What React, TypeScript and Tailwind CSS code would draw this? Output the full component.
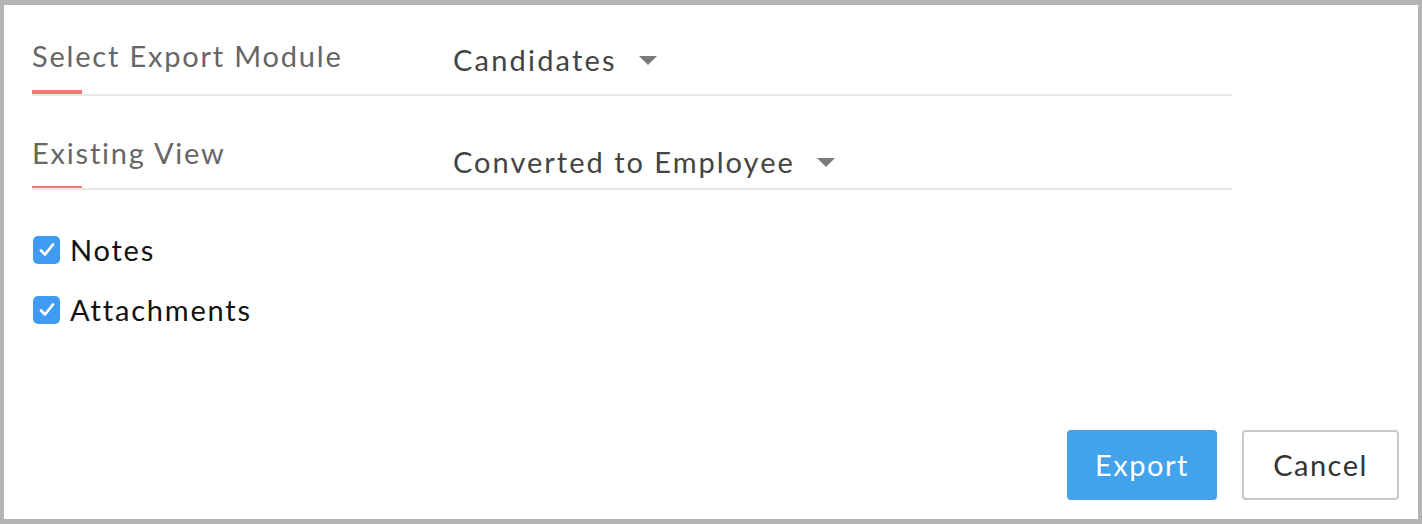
import React from "react";

function Caret() {
  return (
    <svg width="18" height="9" viewBox="0 0 18 9" className="ml-[22px] shrink-0">
      <path d="M0 0 L18 0 L9 9 Z" fill="#7a7a7a" />
    </svg>
  );
}

function Check() {
  return (
    <span className="flex h-[28px] w-[27px] shrink-0 items-center justify-center rounded-[5px] bg-[#3f9cf2]">
      <svg width="20" height="18" viewBox="0 0 20 18">
        <path d="M4 9.5 L8 13.5 L16 3.5" fill="none" stroke="#fff" strokeWidth="2.8" strokeLinecap="round" strokeLinejoin="round" />
      </svg>
    </span>
  );
}

export default function App() {
  return (
    <div
      className="box-border flex h-[524px] w-[1422px] flex-col border-solid border-[#b3b3b3] border-t-[5px] border-l-[4px] border-r-[4px] border-b-[5px] bg-white"
      style={{ fontFamily: "Lato, 'Open Sans', sans-serif" }}
    >
      <div className="flex flex-1 flex-col pl-[28px] pt-[33px]">
        {/* Row 1 */}
        <div className="flex w-[1200px] flex-col">
          <div className="flex">
            <div className="flex w-[421px] flex-col">
              <div className="text-[29px] leading-[36px] tracking-[1.8px] text-[#666666]">Select Export Module</div>
              <div className="mt-[16px] h-[4px] w-[50px] bg-[#f07a74]" />
            </div>
            <div className="mt-[4px] flex items-center self-start">
              <span className="text-[29px] leading-[36px] tracking-[2.2px] text-[#444444]">Candidates</span>
              <Caret />
            </div>
          </div>
          <div className="h-[2px] w-[1200px] bg-[#e8e8e8]" />
        </div>

        {/* Row 2 */}
        <div className="mt-[39px] flex w-[1200px] flex-col">
          <div className="flex">
            <div className="flex w-[421px] flex-col">
              <div className="text-[29px] leading-[36px] tracking-[1.8px] text-[#666666]">Existing View</div>
              <div className="mt-[15px] h-[4px] w-[50px] bg-[#f07a74]" />
            </div>
            <div className="mt-[9px] flex items-center self-start">
              <span className="text-[29px] leading-[36px] tracking-[2px] text-[#444444]">Converted to Employee</span>
              <Caret />
            </div>
          </div>
          <div className="-mt-[2px] h-[2px] w-[1200px] bg-[#e8e8e8]" />
        </div>

        {/* Checkboxes */}
        <div className="mt-[46px] flex flex-col gap-[32px] pl-[1px]">
          <label className="flex items-center gap-[10px]">
            <Check />
            <span className="text-[29px] leading-[28px] tracking-[1.8px] text-[#111111]">Notes</span>
          </label>
          <label className="flex items-center gap-[10px]">
            <Check />
            <span className="text-[29px] leading-[28px] tracking-[1.8px] text-[#111111]">Attachments</span>
          </label>
        </div>
      </div>

      {/* Footer buttons */}
      <div className="flex justify-end gap-[25px] pb-[19px] pr-[19px]">
        <button className="h-[70px] w-[150px] rounded-[4px] bg-[#42a2ec] text-[29px] tracking-[1.5px] text-white">Export</button>
        <button className="h-[70px] w-[157px] rounded-[4px] border-2 border-solid border-[#c8c8c8] bg-white text-[29px] tracking-[1.5px] text-[#333333]">
          Cancel
        </button>
      </div>
    </div>
  );
}
